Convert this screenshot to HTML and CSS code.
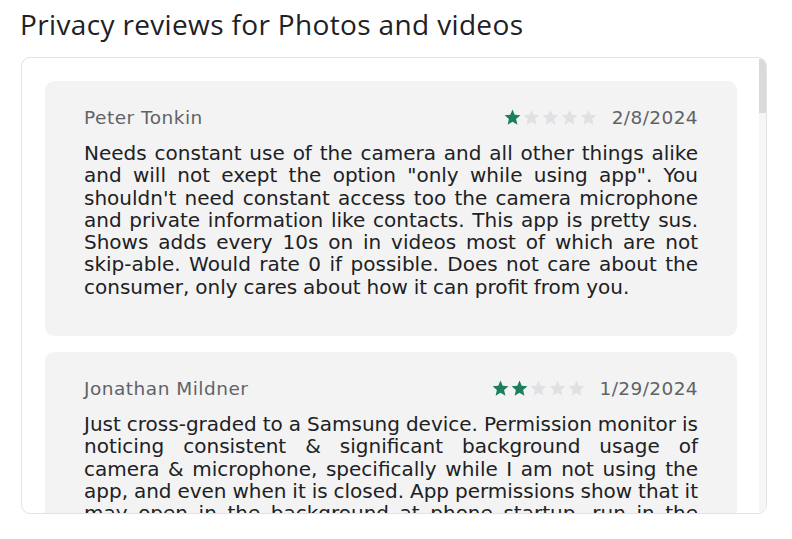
FILE: index.html
```html
<!DOCTYPE html>
<html>
<head>
<meta charset="utf-8">
<link rel="stylesheet" href="styles.css">
</head>
<body>
<h1 class="title">Privacy reviews for Photos and videos</h1>
<div class="panel">
  <div class="list">
    <div class="review">
      <div class="head">
        <span class="name">Peter Tonkin</span>
        <span class="meta">
          <span class="stars">
            <svg viewBox="0 0 24 24" class="star on"><path d="M12 17.27L18.18 21l-1.64-7.03L22 9.24l-7.19-.61L12 2 9.19 8.63 2 9.24l5.46 4.73L5.82 21z"/></svg><svg viewBox="0 0 24 24" class="star"><path d="M12 17.27L18.18 21l-1.64-7.03L22 9.24l-7.19-.61L12 2 9.19 8.63 2 9.24l5.46 4.73L5.82 21z"/></svg><svg viewBox="0 0 24 24" class="star"><path d="M12 17.27L18.18 21l-1.64-7.03L22 9.24l-7.19-.61L12 2 9.19 8.63 2 9.24l5.46 4.73L5.82 21z"/></svg><svg viewBox="0 0 24 24" class="star"><path d="M12 17.27L18.18 21l-1.64-7.03L22 9.24l-7.19-.61L12 2 9.19 8.63 2 9.24l5.46 4.73L5.82 21z"/></svg><svg viewBox="0 0 24 24" class="star"><path d="M12 17.27L18.18 21l-1.64-7.03L22 9.24l-7.19-.61L12 2 9.19 8.63 2 9.24l5.46 4.73L5.82 21z"/></svg>
          </span>
          <span class="date">2/8/2024</span>
        </span>
      </div>
      <p class="text">Needs constant use of the camera and all other things alike and will not exept the option "only while using app". You shouldn't need constant access too the camera microphone and private information like contacts. This app is pretty sus. Shows adds every 10s on in videos most of which are not skip&#8209;able. Would rate 0 if possible. Does not care about the consumer, only cares about how it can profit from you.</p>
    </div>
    <div class="review">
      <div class="head">
        <span class="name">Jonathan Mildner</span>
        <span class="meta">
          <span class="stars">
            <svg viewBox="0 0 24 24" class="star on"><path d="M12 17.27L18.18 21l-1.64-7.03L22 9.24l-7.19-.61L12 2 9.19 8.63 2 9.24l5.46 4.73L5.82 21z"/></svg><svg viewBox="0 0 24 24" class="star on"><path d="M12 17.27L18.18 21l-1.64-7.03L22 9.24l-7.19-.61L12 2 9.19 8.63 2 9.24l5.46 4.73L5.82 21z"/></svg><svg viewBox="0 0 24 24" class="star"><path d="M12 17.27L18.18 21l-1.64-7.03L22 9.24l-7.19-.61L12 2 9.19 8.63 2 9.24l5.46 4.73L5.82 21z"/></svg><svg viewBox="0 0 24 24" class="star"><path d="M12 17.27L18.18 21l-1.64-7.03L22 9.24l-7.19-.61L12 2 9.19 8.63 2 9.24l5.46 4.73L5.82 21z"/></svg><svg viewBox="0 0 24 24" class="star"><path d="M12 17.27L18.18 21l-1.64-7.03L22 9.24l-7.19-.61L12 2 9.19 8.63 2 9.24l5.46 4.73L5.82 21z"/></svg>
          </span>
          <span class="date">1/29/2024</span>
        </span>
      </div>
      <p class="text">Just cross-graded to a Samsung device. Permission monitor is noticing consistent &amp; significant background usage of camera &amp; microphone, specifically while I am not using the app, and even when it is closed. App permissions show that it may open in the background at phone startup, run in the background, and access the camera and microphone at any time.</p>
    </div>
  </div>
  <div class="scrollbar"><div class="thumb"></div></div>
</div>
</body>
</html>
```
FILE: styles.css
```css
html, body {
  margin: 0;
  padding: 0;
  background: #ffffff;
}
body {
  width: 792px;
  height: 539px;
  overflow: hidden;
  font-family: "DejaVu Sans", "Open Sans", sans-serif;
  color: #202124;
}
.title {
  margin: 0;
  padding: 6px 0 0 20px;
  height: 48px;
  box-sizing: border-box;
  font-family: "Open Sans", "Noto Sans", sans-serif;
  font-weight: 400;
  font-size: 28px;
  line-height: 36px;
  letter-spacing: 0.35px;
  color: #202124;
}
.panel {
  margin: 9px 0 0 21px;
  width: 746px;
  height: 457px;
  box-sizing: border-box;
  border: 1px solid #e3e3e3;
  border-radius: 9px;
  overflow: hidden;
  display: flex;
}
.list {
  flex: 1;
  min-width: 0;
  padding: 23px 22px 20px 23px;
  display: flex;
  flex-direction: column;
  gap: 16px;
}
.scrollbar {
  width: 7px;
  flex: none;
  background: #f6f6f6;
  margin-top: 1px;
}
.thumb {
  height: 54px;
  background: #dadada;
}
.review {
  background: #f3f3f3;
  border-radius: 9px;
  padding: 23px 39px 38px 39px;
  flex: none;
}
.head {
  display: flex;
  justify-content: space-between;
  align-items: center;
  height: 26px;
}
.name, .date {
  font-size: 18.5px;
  color: #5f6368;
}
.name {
  letter-spacing: 0.5px;
}
.date {
  letter-spacing: 0.4px;
}
.meta {
  display: flex;
  align-items: center;
  gap: 14px;
}
.stars {
  display: flex;
  align-items: center;
}
.star {
  width: 19px;
  height: 19px;
  fill: #dfe1e4;
}
.star.on {
  fill: #1a7f5a;
}
.text {
  margin: 12px 0 0 0;
  font-size: 20px;
  line-height: 22.3px;
  word-spacing: -0.5px;
  text-align: justify;
  color: #202124;
}
```
